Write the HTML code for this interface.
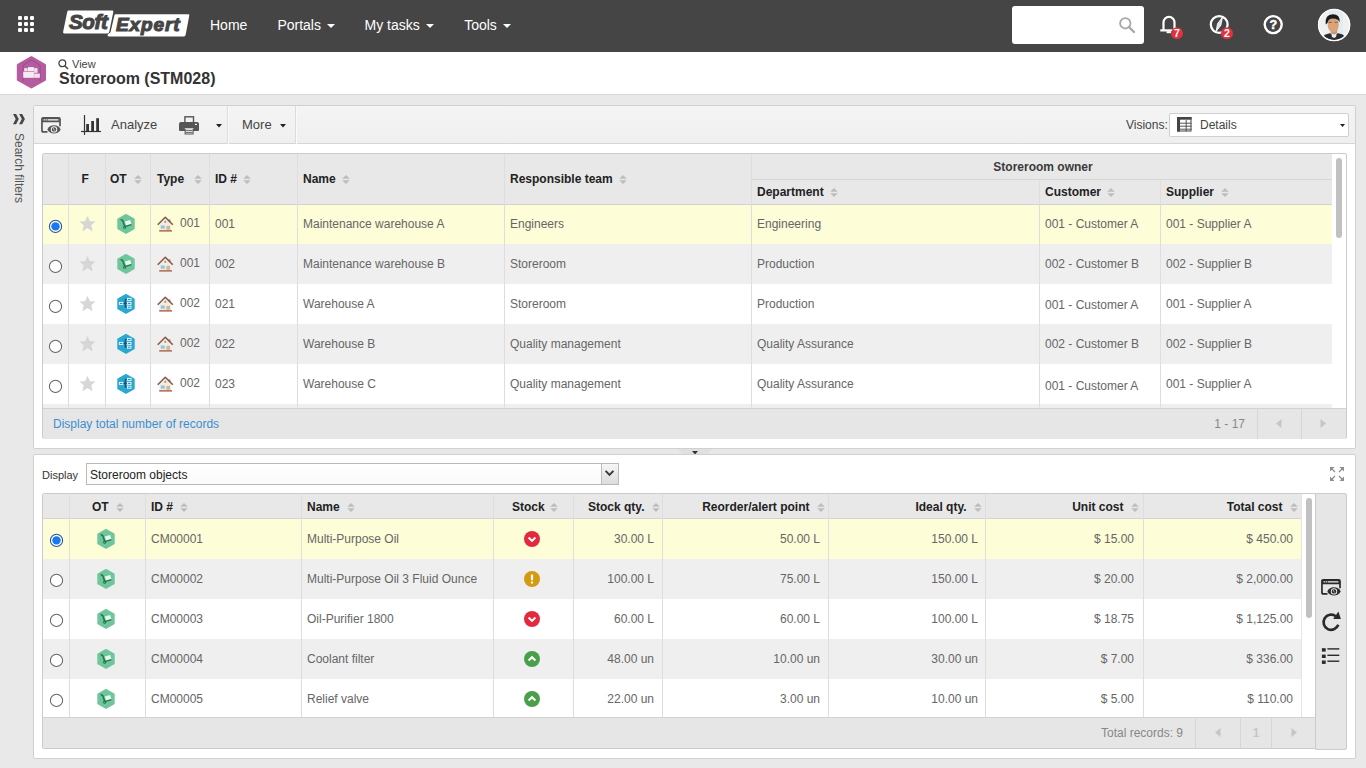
<!DOCTYPE html>
<html><head><meta charset="utf-8"><title>Storeroom</title>
<style>
html,body{margin:0;padding:0;}
body{width:1366px;height:768px;overflow:hidden;position:relative;background:#e9e9e9;font-family:"Liberation Sans", sans-serif;}
div{box-sizing:border-box;}
svg{position:absolute;overflow:visible;}
</style></head><body>

<div style="position:absolute;left:0px;top:0px;width:1366px;height:52px;background:#454545;"></div>
<svg style="left:18px;top:16px" width="16" height="16"><rect x="0" y="0" width="4" height="4" rx="1.2" fill="#fff"/><rect x="6" y="0" width="4" height="4" rx="1.2" fill="#fff"/><rect x="12" y="0" width="4" height="4" rx="1.2" fill="#fff"/><rect x="0" y="6" width="4" height="4" rx="1.2" fill="#fff"/><rect x="6" y="6" width="4" height="4" rx="1.2" fill="#fff"/><rect x="12" y="6" width="4" height="4" rx="1.2" fill="#fff"/><rect x="0" y="12" width="4" height="4" rx="1.2" fill="#fff"/><rect x="6" y="12" width="4" height="4" rx="1.2" fill="#fff"/><rect x="12" y="12" width="4" height="4" rx="1.2" fill="#fff"/></svg>
<svg style="left:0px;top:0px" width="200" height="50" viewBox="0 0 200 50">
<path d="M115.6 14.2 L188.2 14.2 Q189.6 14.2 189.3 15.6 L185.6 35 Q185.3 36.4 183.9 36.4 L108.8 36.4 Q107.2 36.4 107.6 35 L108.6 33.6 Q110.2 33.4 110.6 32 L114.4 15.4 Q114.6 14.2 115.6 14.2 Z" fill="#fff"/>
<path d="M68.6 10.5 L112.2 10.5 Q113.6 10.5 113.3 11.9 L109.2 32 Q108.9 33.4 107.5 33.4 L64.2 33.4 Q62.8 33.4 63.1 32 L67.2 11.9 Q67.5 10.5 68.6 10.5 Z" fill="#fff"/>
<text x="69" y="29.3" font-family="Liberation Sans" font-weight="bold" font-style="italic" font-size="20.5" fill="#454545" stroke="#454545" stroke-width="1.1" letter-spacing="-0.3">Soft</text>
<text x="116" y="31.4" font-family="Liberation Sans" font-weight="bold" font-style="italic" font-size="19" fill="#454545" stroke="#454545" stroke-width="1.1" letter-spacing="0.9">Expert</text>
</svg>
<div style="position:absolute;left:210px;top:17.33px;font-size:14px;line-height:16.099999999999998px;color:#fff;font-weight:normal;white-space:nowrap;">Home</div>
<div style="position:absolute;left:277.4px;top:17.33px;font-size:14px;line-height:16.099999999999998px;color:#fff;font-weight:normal;white-space:nowrap;">Portals</div>
<svg style="left:327px;top:24px" width="8" height="4"><path d="M0 0 L8 0 L4.0 4 Z" fill="#fff"/></svg>
<div style="position:absolute;left:364.5px;top:17.33px;font-size:14px;line-height:16.099999999999998px;color:#fff;font-weight:normal;white-space:nowrap;">My tasks</div>
<svg style="left:426px;top:24px" width="8" height="4"><path d="M0 0 L8 0 L4.0 4 Z" fill="#fff"/></svg>
<div style="position:absolute;left:464.2px;top:17.33px;font-size:14px;line-height:16.099999999999998px;color:#fff;font-weight:normal;white-space:nowrap;">Tools</div>
<svg style="left:503px;top:24px" width="8" height="4"><path d="M0 0 L8 0 L4.0 4 Z" fill="#fff"/></svg>
<div style="position:absolute;left:1012px;top:6px;width:132px;height:38px;background:#fff;border-radius:3px;"></div>
<svg style="left:1119px;top:17px" width="16" height="16"><circle cx="6.3" cy="6.3" r="5.2" fill="none" stroke="#a8a8a8" stroke-width="1.8"/><path d="M10 10 L15 15" stroke="#a8a8a8" stroke-width="2.4" stroke-linecap="round"/></svg>
<svg style="left:1159px;top:14px" width="22" height="22" viewBox="0 0 22 22">
<path d="M4.5 16.3 V8.3 A5.5 5.5 0 0 1 15.5 8.3 V16.3" fill="none" stroke="#fff" stroke-width="2.2"/>
<path d="M1.3 16.4 H18" stroke="#fff" stroke-width="2.2"/>
<path d="M7.6 17.2 H12 V19.2 H7.6 Z" fill="#fff"/>
</svg>
<svg style="left:1171px;top:27px" width="13" height="13"><circle cx="6" cy="6.3" r="6" fill="#e0313f"/><text x="6" y="10.4" text-anchor="middle" font-family="Liberation Sans" font-weight="bold" font-size="10.5" fill="#fff">7</text></svg>
<svg style="left:1208px;top:13px" width="24" height="24" viewBox="1208 13 24 24">
<circle cx="1219.2" cy="24.5" r="8.4" fill="none" stroke="#fff" stroke-width="2.3"/>
<path d="M1222.4 17.4 L1220.9 25.2 L1216.1 31.4 L1217.6 23.6 Z" fill="#dde3ea" stroke="#fff" stroke-width="0.9" stroke-linejoin="round"/>
</svg>
<svg style="left:1221px;top:27px" width="13" height="13"><circle cx="6" cy="6.3" r="6" fill="#e0313f"/><text x="6" y="10.4" text-anchor="middle" font-family="Liberation Sans" font-weight="bold" font-size="10.5" fill="#fff">2</text></svg>
<svg style="left:1262px;top:13px" width="22" height="23" viewBox="1262 13 22 23">
<circle cx="1273.2" cy="24.6" r="8.5" fill="none" stroke="#fff" stroke-width="2.4"/>
<text x="1273.3" y="29.4" text-anchor="middle" font-family="Liberation Sans" font-weight="bold" font-size="12.5" fill="#fff" stroke="#fff" stroke-width="0.5">?</text>
</svg>
<svg style="left:1316px;top:7px" width="36" height="36" viewBox="1316 7 36 36">
<defs><clipPath id="av"><circle cx="1334.1" cy="25" r="15.2"/></clipPath></defs>
<circle cx="1334.1" cy="25" r="16.1" fill="#f7f7f7"/>
<g clip-path="url(#av)">
<rect x="1316" y="7" width="36" height="36" fill="#eef0f2"/>
<rect x="1329" y="9" width="14" height="26" fill="#e3ecef"/>
<path d="M1322 43 L1324.3 35 Q1327 33.6 1330 33.2 L1334 35 L1338 33.2 Q1341.5 33.6 1343.5 35 L1346 43 Z" fill="#2a2c33"/>
<path d="M1331 32.5 L1337 32.5 L1336 37 L1334 38 L1332 37 Z" fill="#e9ecef"/>
<path d="M1330.5 28 L1337.5 28 L1337 33.5 L1334 34.5 L1331 33.5 Z" fill="#c9986f"/>
<ellipse cx="1333.2" cy="24.8" rx="5.6" ry="7.4" fill="#d9a476"/>
<path d="M1325.6 24.5 Q1324.8 14.2 1332.8 14.2 Q1340.4 14.2 1339.6 22.5 Q1338.2 18.8 1333 18.6 Q1328.4 18.6 1327.5 23 Z" fill="#1b1b1f"/>
<path d="M1328.6 22.3 H1331.8 M1334.6 22.3 H1337.8" stroke="#6b4a3a" stroke-width="0.8"/>
</g>
<circle cx="1334.1" cy="25" r="15.6" fill="none" stroke="#fdfdfd" stroke-width="1.2"/>
</svg>
<div style="position:absolute;left:0px;top:52px;width:1366px;height:43px;background:#fff;border-bottom:1px solid #d9d9d9;"></div>
<svg style="left:16px;top:55px" width="31" height="35" viewBox="0 0 31 35">
<path d="M15.4 2.3 L28.9 9.9 L28.9 24.8 L15.4 32.4 L1.9 24.8 L1.9 9.9 Z" fill="#b45c9f" stroke="#b45c9f" stroke-width="2.2" stroke-linejoin="round"/>
<path d="M7.2 26 V10.2 L15.3 5 L24.1 10.2 V26" fill="none" stroke="#9b4a8a" stroke-width="1"/>
<rect x="8.2" y="13.1" width="3.4" height="2.9" fill="#efe2ec"/>
<rect x="11.9" y="12.1" width="6" height="3.9" fill="#f5ecf3"/>
<rect x="18.1" y="13.1" width="3.4" height="4.7" fill="#efe2ec"/>
<rect x="7.2" y="16.6" width="10.7" height="6.2" fill="#f5ecf3"/>
<rect x="18.1" y="18.6" width="5.8" height="4.2" fill="#efe2ec"/>
</svg>
<svg style="left:58px;top:59px" width="11" height="11"><circle cx="4.3" cy="4.3" r="3.4" fill="none" stroke="#444" stroke-width="1.3"/><path d="M6.8 6.8 L10 10" stroke="#444" stroke-width="1.5"/></svg>
<div style="position:absolute;left:72px;top:58.04px;font-size:11px;line-height:12.649999999999999px;color:#444;font-weight:normal;white-space:nowrap;">View</div>
<div style="position:absolute;left:59px;top:69.52px;font-size:16px;line-height:18.4px;color:#333;font-weight:bold;white-space:nowrap;">Storeroom (STM028)</div>
<svg style="left:12.9px;top:113.8px" width="13" height="11" viewBox="0 0 13 11"><path d="M0 0 L3.1 0 L5.8 5.1 L3.1 10.2 L0 10.2 L2.7 5.1 Z M6.1 0 L9.2 0 L11.9 5.1 L9.2 10.2 L6.1 10.2 L8.8 5.1 Z" fill="#474747"/></svg>
<div style="position:absolute;left:25.5px;top:133px;transform-origin:0 0;transform:rotate(90deg);font-size:12px;line-height:14px;color:#555;white-space:nowrap;">Search filters</div>
<div style="position:absolute;left:33px;top:105px;width:1323px;height:344px;background:#fff;border:1px solid #d0d0d0;border-radius:2px;"></div>
<div style="position:absolute;left:34px;top:106px;width:1321px;height:38px;background:linear-gradient(#f4f4f4,#efefef);border-bottom:1px solid #d6d6d6;"></div>
<div style="position:absolute;left:227px;top:106px;width:1px;height:38px;background:#dcdcdc;"></div>
<div style="position:absolute;left:228px;top:106px;width:1px;height:38px;background:#fafafa;"></div>
<div style="position:absolute;left:295px;top:106px;width:1px;height:38px;background:#dcdcdc;"></div>
<div style="position:absolute;left:296px;top:106px;width:1px;height:38px;background:#fafafa;"></div>
<svg style="left:41px;top:117px" width="21" height="18" viewBox="0 0 21 18">
<path d="M6.5 14.9 H2.2 Q0.95 14.9 0.95 13.6 V2.1 Q0.95 0.85 2.2 0.85 H17.8 Q19 0.85 19 2.1 V9.3" fill="none" stroke="#555" stroke-width="1.7"/>
<rect x="0.95" y="0.85" width="18" height="4.4" fill="#555"/>
<rect x="2.6" y="2.2" width="1.3" height="1.3" fill="#f2f2f2"/><rect x="4.6" y="2.2" width="1.3" height="1.3" fill="#f2f2f2"/>
<rect x="6.6" y="2.2" width="10.8" height="1.3" fill="#f2f2f2"/>
<path d="M5.6 12.4 C8.2 6.4 17.8 6.4 20.4 12.4 C17.8 18.4 8.2 18.4 5.6 12.4 Z" fill="#f2f2f2"/><path d="M6.3 12.4 C8.7 7 17.3 7 19.7 12.4 C17.3 17.8 8.7 17.8 6.3 12.4 Z" fill="#555"/>
<circle cx="13" cy="12.4" r="3.2" fill="#f2f2f2"/>
<circle cx="13" cy="12.4" r="2.2" fill="#555"/>
<path d="M12.3 10.9 L12.9 12.9 L13.8 13.3" fill="none" stroke="#f2f2f2" stroke-width="0.6"/>
</svg>
<svg style="left:81px;top:115px" width="21" height="21" viewBox="0 0 21 21">
<path d="M3.5 0 V20" stroke="#333" stroke-width="1.2"/>
<path d="M0 16.5 H20" stroke="#333" stroke-width="1.2"/>
<rect x="5.2" y="9" width="2.8" height="7.5" fill="#333"/>
<rect x="10.2" y="6" width="2.8" height="10.5" fill="#333"/>
<rect x="15.2" y="3.2" width="2.8" height="13.3" fill="#333"/>
</svg>
<div style="position:absolute;left:111px;top:118.23px;font-size:13px;line-height:14.95px;color:#444;font-weight:normal;white-space:nowrap;">Analyze</div>
<svg style="left:179px;top:116px" width="20" height="19" viewBox="0 0 20 19">
<rect x="5.9" y="0.8" width="8.6" height="6" fill="none" stroke="#555" stroke-width="1.4"/>
<path d="M2 6 H18 Q20 6 20 8 V14 Q20 15 19 15 H1 Q0 15 0 14 V8 Q0 6 2 6 Z" fill="#555"/>
<path d="M3.8 11.5 H16.2 L14.6 13 V18.6 H5.6 V13 Z" fill="#555"/>
<path d="M5.2 12.2 H15 L13.6 13.3 V17.5 H6.7 V13.3 Z" fill="#f2f2f2"/>
<rect x="6.7" y="13.9" width="6.9" height="0.9" fill="#555"/>
<rect x="6.7" y="15.9" width="6.9" height="0.9" fill="#555"/>
<rect x="16" y="7.8" width="1.8" height="1.2" fill="#fff"/>
</svg>
<svg style="left:216px;top:124px" width="6" height="3.6"><path d="M0 0 L6 0 L3.0 3.6 Z" fill="#222"/></svg>
<div style="position:absolute;left:242px;top:118.23px;font-size:13px;line-height:14.95px;color:#444;font-weight:normal;white-space:nowrap;">More</div>
<svg style="left:280px;top:124px" width="6" height="3.6"><path d="M0 0 L6 0 L3.0 3.6 Z" fill="#222"/></svg>
<div style="position:absolute;left:1126px;top:119.14px;font-size:12px;line-height:13.799999999999999px;color:#444;font-weight:normal;white-space:nowrap;">Visions:</div>
<div style="position:absolute;left:1169px;top:113px;width:180px;height:24px;background:#fff;border:1px solid #cfcfcf;border-radius:2px;"></div>
<svg style="left:1177px;top:117px" width="15" height="15"><rect x="0.5" y="0.5" width="13.5" height="13.5" fill="#fff" stroke="#444" stroke-width="1"/><rect x="0" y="0" width="14.5" height="2.7" fill="#444"/><rect x="0" y="0" width="3" height="14.5" fill="#444"/><path d="M3 6.2 H14.5" stroke="#444" stroke-width="0.9"/><path d="M3 9.2 H14.5" stroke="#444" stroke-width="0.9"/><path d="M3 12.2 H14.5" stroke="#444" stroke-width="0.9"/><path d="M9.2 3 V14.5" stroke="#444" stroke-width="0.9"/></svg>
<div style="position:absolute;left:1200px;top:119.14px;font-size:12px;line-height:13.799999999999999px;color:#444;font-weight:normal;white-space:nowrap;">Details</div>
<svg style="left:1340px;top:124px" width="5" height="3"><path d="M0 0 L5 0 L2.5 3 Z" fill="#222"/></svg>
<div style="position:absolute;left:42px;top:153px;width:1305px;height:286px;background:#fff;border:1px solid #cbcbcb;border-radius:2px;"></div>
<div style="position:absolute;left:43px;top:154px;width:1289px;height:51px;background:#e8e8e8;border-bottom:1px solid #d2d2d2;"></div>
<div style="position:absolute;left:43px;top:205px;width:1289px;height:39px;background:#fdfdd8;"></div>
<div style="position:absolute;left:43px;top:244px;width:1289px;height:40px;background:#efefef;"></div>
<div style="position:absolute;left:43px;top:284px;width:1289px;height:40px;background:#fff;"></div>
<div style="position:absolute;left:43px;top:324px;width:1289px;height:40px;background:#efefef;"></div>
<div style="position:absolute;left:43px;top:364px;width:1289px;height:40px;background:#fff;"></div>
<div style="position:absolute;left:43px;top:404px;width:1289px;height:4px;background:#efefef;"></div>
<div style="position:absolute;left:68px;top:154px;width:1px;height:254px;background:#dedede;"></div>
<div style="position:absolute;left:105px;top:154px;width:1px;height:254px;background:#dedede;"></div>
<div style="position:absolute;left:150px;top:154px;width:1px;height:254px;background:#dedede;"></div>
<div style="position:absolute;left:209px;top:154px;width:1px;height:254px;background:#dedede;"></div>
<div style="position:absolute;left:297px;top:154px;width:1px;height:254px;background:#dedede;"></div>
<div style="position:absolute;left:504px;top:154px;width:1px;height:254px;background:#dedede;"></div>
<div style="position:absolute;left:751px;top:154px;width:1px;height:254px;background:#dedede;"></div>
<div style="position:absolute;left:1039px;top:179px;width:1px;height:229px;background:#dedede;"></div>
<div style="position:absolute;left:1160px;top:179px;width:1px;height:229px;background:#dedede;"></div>
<div style="position:absolute;left:751px;top:179px;width:581px;height:1px;background:#d6d6d6;"></div>
<div style="position:absolute;left:1336px;top:158px;width:6px;height:80px;background:#c1c1c1;border-radius:3px;"></div>
<div style="position:absolute;left:81.5px;top:173.14px;font-size:12px;line-height:13.799999999999999px;color:#222;font-weight:bold;white-space:nowrap;">F</div>
<div style="position:absolute;left:110px;top:173.14px;font-size:12px;line-height:13.799999999999999px;color:#222;font-weight:bold;white-space:nowrap;">OT</div>
<svg style="left:134px;top:175px" width="8" height="9"><path d="M0.2 3.7 L4 0 L7.8 3.7 Z M0.2 5.3 L4 9 L7.8 5.3 Z" fill="#bdbdbd"/></svg>
<div style="position:absolute;left:157px;top:173.14px;font-size:12px;line-height:13.799999999999999px;color:#222;font-weight:bold;white-space:nowrap;">Type</div>
<svg style="left:194px;top:175px" width="8" height="9"><path d="M0.2 3.7 L4 0 L7.8 3.7 Z M0.2 5.3 L4 9 L7.8 5.3 Z" fill="#bdbdbd"/></svg>
<div style="position:absolute;left:215px;top:173.14px;font-size:12px;line-height:13.799999999999999px;color:#222;font-weight:bold;white-space:nowrap;">ID #</div>
<svg style="left:243px;top:175px" width="8" height="9"><path d="M0.2 3.7 L4 0 L7.8 3.7 Z M0.2 5.3 L4 9 L7.8 5.3 Z" fill="#bdbdbd"/></svg>
<div style="position:absolute;left:303px;top:173.14px;font-size:12px;line-height:13.799999999999999px;color:#222;font-weight:bold;white-space:nowrap;">Name</div>
<svg style="left:342px;top:175px" width="8" height="9"><path d="M0.2 3.7 L4 0 L7.8 3.7 Z M0.2 5.3 L4 9 L7.8 5.3 Z" fill="#bdbdbd"/></svg>
<div style="position:absolute;left:510px;top:173.14px;font-size:12px;line-height:13.799999999999999px;color:#222;font-weight:bold;white-space:nowrap;">Responsible team</div>
<svg style="left:619px;top:175px" width="8" height="9"><path d="M0.2 3.7 L4 0 L7.8 3.7 Z M0.2 5.3 L4 9 L7.8 5.3 Z" fill="#bdbdbd"/></svg>
<div style="position:absolute;left:843px;width:400px;top:161.14px;font-size:12px;line-height:13.799999999999999px;color:#3a3a3a;font-weight:bold;white-space:nowrap;text-align:center;">Storeroom owner</div>
<div style="position:absolute;left:757px;top:186.14px;font-size:12px;line-height:13.799999999999999px;color:#222;font-weight:bold;white-space:nowrap;">Department</div>
<svg style="left:830px;top:188px" width="8" height="9"><path d="M0.2 3.7 L4 0 L7.8 3.7 Z M0.2 5.3 L4 9 L7.8 5.3 Z" fill="#bdbdbd"/></svg>
<div style="position:absolute;left:1045px;top:186.14px;font-size:12px;line-height:13.799999999999999px;color:#222;font-weight:bold;white-space:nowrap;">Customer</div>
<svg style="left:1107px;top:188px" width="8" height="9"><path d="M0.2 3.7 L4 0 L7.8 3.7 Z M0.2 5.3 L4 9 L7.8 5.3 Z" fill="#bdbdbd"/></svg>
<div style="position:absolute;left:1166px;top:186.14px;font-size:12px;line-height:13.799999999999999px;color:#222;font-weight:bold;white-space:nowrap;">Supplier</div>
<svg style="left:1221px;top:188px" width="8" height="9"><path d="M0.2 3.7 L4 0 L7.8 3.7 Z M0.2 5.3 L4 9 L7.8 5.3 Z" fill="#bdbdbd"/></svg>
<svg style="left:48px;top:219px" width="15" height="15"><circle cx="7.5" cy="7.4" r="6.1" fill="#fff" stroke="#24589a" stroke-width="1.1"/><circle cx="7.5" cy="7.4" r="4.2" fill="#1877f2"/></svg>
<svg style="left:80px;top:216px" width="15" height="16" viewBox="0 0 15 15.5"><path d="M7.5 0.3 L9.6 5.2 L14.7 5.6 L10.9 9.1 L12.2 14.6 L7.5 11.6 L2.8 14.6 L4.1 9.1 L0.3 5.6 L5.4 5.2 Z" fill="#d6d6d6" stroke="#cfcfcf" stroke-width="0.5" stroke-linejoin="round"/></svg>
<svg style="left:116px;top:213px" width="20" height="21" viewBox="0 0 20 21">
<path d="M10 1.7 L17.9 6.3 L17.9 15.5 L10 20.1 L2.1 15.5 L2.1 6.3 Z" fill="#70c69c" stroke="#70c69c" stroke-width="1.6" stroke-linejoin="round"/>
<path d="M8.9 8.4 L14.2 6.9 L15.4 11.3 L10.1 12.8 Z" fill="#eaf8ef"/>
<path d="M5.1 6.7 L6.7 7.6 L8.7 13.4" fill="none" stroke="#1b7a45" stroke-width="1.5" stroke-linecap="round"/>
<path d="M8.4 13.6 L15.4 11.6" stroke="#1b7a45" stroke-width="1.4"/>
<circle cx="8.6" cy="14.2" r="1.5" fill="#1b7a45"/><circle cx="8.6" cy="14.2" r="0.5" fill="#70c69c"/>
</svg>
<svg style="left:157px;top:216px" width="17" height="16" viewBox="0 0 17 16">
<path d="M2.5 8 V15 H14 V8 L8.3 2.6 Z" fill="#f7ecd9"/>
<path d="M0.7 8.8 L8.3 1.3 L15.8 8.8" fill="none" stroke="#8d5a48" stroke-width="1.6" stroke-linejoin="round"/>
<path d="M12.5 3.5 V6" stroke="#8d5a48" stroke-width="1.6"/>
<circle cx="8.3" cy="5.8" r="1.1" fill="#5aa8e0"/>
<rect x="3.8" y="9.5" width="4" height="3.2" fill="#8cc6ee"/>
<rect x="9.3" y="9.8" width="3.8" height="4" fill="#c8b9a6"/>
<rect x="2.2" y="14" width="12.8" height="1.7" fill="#b9785e"/>
</svg>
<div style="position:absolute;left:180px;top:217.14px;font-size:12px;line-height:13.799999999999999px;color:#666;font-weight:normal;white-space:nowrap;">001</div>
<div style="position:absolute;left:215px;top:218.14px;font-size:12px;line-height:13.799999999999999px;color:#666;font-weight:normal;white-space:nowrap;">001</div>
<div style="position:absolute;left:303px;top:218.14px;font-size:12px;line-height:13.799999999999999px;color:#666;font-weight:normal;white-space:nowrap;">Maintenance warehouse A</div>
<div style="position:absolute;left:510px;top:218.14px;font-size:12px;line-height:13.799999999999999px;color:#666;font-weight:normal;white-space:nowrap;">Engineers</div>
<div style="position:absolute;left:757px;top:218.14px;font-size:12px;line-height:13.799999999999999px;color:#666;font-weight:normal;white-space:nowrap;">Engineering</div>
<div style="position:absolute;left:1045px;top:218.14px;font-size:12px;line-height:13.799999999999999px;color:#666;font-weight:normal;white-space:nowrap;">001 - Customer A</div>
<div style="position:absolute;left:1166px;top:218.14px;font-size:12px;line-height:13.799999999999999px;color:#666;font-weight:normal;white-space:nowrap;">001 - Supplier A</div>
<svg style="left:48px;top:259px" width="15" height="15"><circle cx="7.5" cy="7.4" r="6.1" fill="#fff" stroke="#666" stroke-width="1.05"/></svg>
<svg style="left:80px;top:256px" width="15" height="16" viewBox="0 0 15 15.5"><path d="M7.5 0.3 L9.6 5.2 L14.7 5.6 L10.9 9.1 L12.2 14.6 L7.5 11.6 L2.8 14.6 L4.1 9.1 L0.3 5.6 L5.4 5.2 Z" fill="#d6d6d6" stroke="#cfcfcf" stroke-width="0.5" stroke-linejoin="round"/></svg>
<svg style="left:116px;top:253px" width="20" height="21" viewBox="0 0 20 21">
<path d="M10 1.7 L17.9 6.3 L17.9 15.5 L10 20.1 L2.1 15.5 L2.1 6.3 Z" fill="#70c69c" stroke="#70c69c" stroke-width="1.6" stroke-linejoin="round"/>
<path d="M8.9 8.4 L14.2 6.9 L15.4 11.3 L10.1 12.8 Z" fill="#eaf8ef"/>
<path d="M5.1 6.7 L6.7 7.6 L8.7 13.4" fill="none" stroke="#1b7a45" stroke-width="1.5" stroke-linecap="round"/>
<path d="M8.4 13.6 L15.4 11.6" stroke="#1b7a45" stroke-width="1.4"/>
<circle cx="8.6" cy="14.2" r="1.5" fill="#1b7a45"/><circle cx="8.6" cy="14.2" r="0.5" fill="#70c69c"/>
</svg>
<svg style="left:157px;top:256px" width="17" height="16" viewBox="0 0 17 16">
<path d="M2.5 8 V15 H14 V8 L8.3 2.6 Z" fill="#f7ecd9"/>
<path d="M0.7 8.8 L8.3 1.3 L15.8 8.8" fill="none" stroke="#8d5a48" stroke-width="1.6" stroke-linejoin="round"/>
<path d="M12.5 3.5 V6" stroke="#8d5a48" stroke-width="1.6"/>
<circle cx="8.3" cy="5.8" r="1.1" fill="#5aa8e0"/>
<rect x="3.8" y="9.5" width="4" height="3.2" fill="#8cc6ee"/>
<rect x="9.3" y="9.8" width="3.8" height="4" fill="#c8b9a6"/>
<rect x="2.2" y="14" width="12.8" height="1.7" fill="#b9785e"/>
</svg>
<div style="position:absolute;left:180px;top:257.14px;font-size:12px;line-height:13.799999999999999px;color:#666;font-weight:normal;white-space:nowrap;">001</div>
<div style="position:absolute;left:215px;top:258.14px;font-size:12px;line-height:13.799999999999999px;color:#666;font-weight:normal;white-space:nowrap;">002</div>
<div style="position:absolute;left:303px;top:258.14px;font-size:12px;line-height:13.799999999999999px;color:#666;font-weight:normal;white-space:nowrap;">Maintenance warehouse B</div>
<div style="position:absolute;left:510px;top:258.14px;font-size:12px;line-height:13.799999999999999px;color:#666;font-weight:normal;white-space:nowrap;">Storeroom</div>
<div style="position:absolute;left:757px;top:258.14px;font-size:12px;line-height:13.799999999999999px;color:#666;font-weight:normal;white-space:nowrap;">Production</div>
<div style="position:absolute;left:1045px;top:258.14px;font-size:12px;line-height:13.799999999999999px;color:#666;font-weight:normal;white-space:nowrap;">002 - Customer B</div>
<div style="position:absolute;left:1166px;top:258.14px;font-size:12px;line-height:13.799999999999999px;color:#666;font-weight:normal;white-space:nowrap;">002 - Supplier B</div>
<svg style="left:48px;top:299px" width="15" height="15"><circle cx="7.5" cy="7.4" r="6.1" fill="#fff" stroke="#666" stroke-width="1.05"/></svg>
<svg style="left:80px;top:296px" width="15" height="16" viewBox="0 0 15 15.5"><path d="M7.5 0.3 L9.6 5.2 L14.7 5.6 L10.9 9.1 L12.2 14.6 L7.5 11.6 L2.8 14.6 L4.1 9.1 L0.3 5.6 L5.4 5.2 Z" fill="#d6d6d6" stroke="#cfcfcf" stroke-width="0.5" stroke-linejoin="round"/></svg>
<svg style="left:116px;top:293px" width="20" height="21" viewBox="0 0 20 21">
<path d="M10 1.7 L17.9 6.3 L17.9 15.5 L10 20.1 L2.1 15.5 L2.1 6.3 Z" fill="#2ba8d0" stroke="#2ba8d0" stroke-width="1.6" stroke-linejoin="round"/>
<path d="M7 10.4 H10 M9.3 6.4 V14.2 M9.3 6.4 H11 M9.3 14.2 H11 M9.3 10.4 H11" stroke="#154e7c" stroke-width="1.3" fill="none"/>
<rect x="3.4" y="9.4" width="3.5" height="2" fill="#1f8fb8" stroke="#f0fafd" stroke-width="0.9"/>
<rect x="11.4" y="5.4" width="3.6" height="2" fill="#1f8fb8" stroke="#f0fafd" stroke-width="0.9"/>
<rect x="11.4" y="9.4" width="3.6" height="2" fill="#1f8fb8" stroke="#f0fafd" stroke-width="0.9"/>
<rect x="11.4" y="13.2" width="3.6" height="2" fill="#1f8fb8" stroke="#f0fafd" stroke-width="0.9"/>
</svg>
<svg style="left:157px;top:296px" width="17" height="16" viewBox="0 0 17 16">
<path d="M2.5 8 V15 H14 V8 L8.3 2.6 Z" fill="#f7ecd9"/>
<path d="M0.7 8.8 L8.3 1.3 L15.8 8.8" fill="none" stroke="#8d5a48" stroke-width="1.6" stroke-linejoin="round"/>
<path d="M12.5 3.5 V6" stroke="#8d5a48" stroke-width="1.6"/>
<circle cx="8.3" cy="5.8" r="1.1" fill="#5aa8e0"/>
<rect x="3.8" y="9.5" width="4" height="3.2" fill="#8cc6ee"/>
<rect x="9.3" y="9.8" width="3.8" height="4" fill="#c8b9a6"/>
<rect x="2.2" y="14" width="12.8" height="1.7" fill="#b9785e"/>
</svg>
<div style="position:absolute;left:180px;top:297.14px;font-size:12px;line-height:13.799999999999999px;color:#666;font-weight:normal;white-space:nowrap;">002</div>
<div style="position:absolute;left:215px;top:298.14px;font-size:12px;line-height:13.799999999999999px;color:#666;font-weight:normal;white-space:nowrap;">021</div>
<div style="position:absolute;left:303px;top:298.14px;font-size:12px;line-height:13.799999999999999px;color:#666;font-weight:normal;white-space:nowrap;">Warehouse A</div>
<div style="position:absolute;left:510px;top:298.14px;font-size:12px;line-height:13.799999999999999px;color:#666;font-weight:normal;white-space:nowrap;">Storeroom</div>
<div style="position:absolute;left:757px;top:298.14px;font-size:12px;line-height:13.799999999999999px;color:#666;font-weight:normal;white-space:nowrap;">Production</div>
<div style="position:absolute;left:1045px;top:299.14px;font-size:12px;line-height:13.799999999999999px;color:#666;font-weight:normal;white-space:nowrap;">001 - Customer A</div>
<div style="position:absolute;left:1166px;top:298.14px;font-size:12px;line-height:13.799999999999999px;color:#666;font-weight:normal;white-space:nowrap;">001 - Supplier A</div>
<svg style="left:48px;top:339px" width="15" height="15"><circle cx="7.5" cy="7.4" r="6.1" fill="#fff" stroke="#666" stroke-width="1.05"/></svg>
<svg style="left:80px;top:336px" width="15" height="16" viewBox="0 0 15 15.5"><path d="M7.5 0.3 L9.6 5.2 L14.7 5.6 L10.9 9.1 L12.2 14.6 L7.5 11.6 L2.8 14.6 L4.1 9.1 L0.3 5.6 L5.4 5.2 Z" fill="#d6d6d6" stroke="#cfcfcf" stroke-width="0.5" stroke-linejoin="round"/></svg>
<svg style="left:116px;top:333px" width="20" height="21" viewBox="0 0 20 21">
<path d="M10 1.7 L17.9 6.3 L17.9 15.5 L10 20.1 L2.1 15.5 L2.1 6.3 Z" fill="#2ba8d0" stroke="#2ba8d0" stroke-width="1.6" stroke-linejoin="round"/>
<path d="M7 10.4 H10 M9.3 6.4 V14.2 M9.3 6.4 H11 M9.3 14.2 H11 M9.3 10.4 H11" stroke="#154e7c" stroke-width="1.3" fill="none"/>
<rect x="3.4" y="9.4" width="3.5" height="2" fill="#1f8fb8" stroke="#f0fafd" stroke-width="0.9"/>
<rect x="11.4" y="5.4" width="3.6" height="2" fill="#1f8fb8" stroke="#f0fafd" stroke-width="0.9"/>
<rect x="11.4" y="9.4" width="3.6" height="2" fill="#1f8fb8" stroke="#f0fafd" stroke-width="0.9"/>
<rect x="11.4" y="13.2" width="3.6" height="2" fill="#1f8fb8" stroke="#f0fafd" stroke-width="0.9"/>
</svg>
<svg style="left:157px;top:336px" width="17" height="16" viewBox="0 0 17 16">
<path d="M2.5 8 V15 H14 V8 L8.3 2.6 Z" fill="#f7ecd9"/>
<path d="M0.7 8.8 L8.3 1.3 L15.8 8.8" fill="none" stroke="#8d5a48" stroke-width="1.6" stroke-linejoin="round"/>
<path d="M12.5 3.5 V6" stroke="#8d5a48" stroke-width="1.6"/>
<circle cx="8.3" cy="5.8" r="1.1" fill="#5aa8e0"/>
<rect x="3.8" y="9.5" width="4" height="3.2" fill="#8cc6ee"/>
<rect x="9.3" y="9.8" width="3.8" height="4" fill="#c8b9a6"/>
<rect x="2.2" y="14" width="12.8" height="1.7" fill="#b9785e"/>
</svg>
<div style="position:absolute;left:180px;top:337.14px;font-size:12px;line-height:13.799999999999999px;color:#666;font-weight:normal;white-space:nowrap;">002</div>
<div style="position:absolute;left:215px;top:338.14px;font-size:12px;line-height:13.799999999999999px;color:#666;font-weight:normal;white-space:nowrap;">022</div>
<div style="position:absolute;left:303px;top:338.14px;font-size:12px;line-height:13.799999999999999px;color:#666;font-weight:normal;white-space:nowrap;">Warehouse B</div>
<div style="position:absolute;left:510px;top:338.14px;font-size:12px;line-height:13.799999999999999px;color:#666;font-weight:normal;white-space:nowrap;">Quality management</div>
<div style="position:absolute;left:757px;top:338.14px;font-size:12px;line-height:13.799999999999999px;color:#666;font-weight:normal;white-space:nowrap;">Quality Assurance</div>
<div style="position:absolute;left:1045px;top:338.14px;font-size:12px;line-height:13.799999999999999px;color:#666;font-weight:normal;white-space:nowrap;">002 - Customer B</div>
<div style="position:absolute;left:1166px;top:338.14px;font-size:12px;line-height:13.799999999999999px;color:#666;font-weight:normal;white-space:nowrap;">002 - Supplier B</div>
<svg style="left:48px;top:379px" width="15" height="15"><circle cx="7.5" cy="7.4" r="6.1" fill="#fff" stroke="#666" stroke-width="1.05"/></svg>
<svg style="left:80px;top:376px" width="15" height="16" viewBox="0 0 15 15.5"><path d="M7.5 0.3 L9.6 5.2 L14.7 5.6 L10.9 9.1 L12.2 14.6 L7.5 11.6 L2.8 14.6 L4.1 9.1 L0.3 5.6 L5.4 5.2 Z" fill="#d6d6d6" stroke="#cfcfcf" stroke-width="0.5" stroke-linejoin="round"/></svg>
<svg style="left:116px;top:373px" width="20" height="21" viewBox="0 0 20 21">
<path d="M10 1.7 L17.9 6.3 L17.9 15.5 L10 20.1 L2.1 15.5 L2.1 6.3 Z" fill="#2ba8d0" stroke="#2ba8d0" stroke-width="1.6" stroke-linejoin="round"/>
<path d="M7 10.4 H10 M9.3 6.4 V14.2 M9.3 6.4 H11 M9.3 14.2 H11 M9.3 10.4 H11" stroke="#154e7c" stroke-width="1.3" fill="none"/>
<rect x="3.4" y="9.4" width="3.5" height="2" fill="#1f8fb8" stroke="#f0fafd" stroke-width="0.9"/>
<rect x="11.4" y="5.4" width="3.6" height="2" fill="#1f8fb8" stroke="#f0fafd" stroke-width="0.9"/>
<rect x="11.4" y="9.4" width="3.6" height="2" fill="#1f8fb8" stroke="#f0fafd" stroke-width="0.9"/>
<rect x="11.4" y="13.2" width="3.6" height="2" fill="#1f8fb8" stroke="#f0fafd" stroke-width="0.9"/>
</svg>
<svg style="left:157px;top:376px" width="17" height="16" viewBox="0 0 17 16">
<path d="M2.5 8 V15 H14 V8 L8.3 2.6 Z" fill="#f7ecd9"/>
<path d="M0.7 8.8 L8.3 1.3 L15.8 8.8" fill="none" stroke="#8d5a48" stroke-width="1.6" stroke-linejoin="round"/>
<path d="M12.5 3.5 V6" stroke="#8d5a48" stroke-width="1.6"/>
<circle cx="8.3" cy="5.8" r="1.1" fill="#5aa8e0"/>
<rect x="3.8" y="9.5" width="4" height="3.2" fill="#8cc6ee"/>
<rect x="9.3" y="9.8" width="3.8" height="4" fill="#c8b9a6"/>
<rect x="2.2" y="14" width="12.8" height="1.7" fill="#b9785e"/>
</svg>
<div style="position:absolute;left:180px;top:377.14px;font-size:12px;line-height:13.799999999999999px;color:#666;font-weight:normal;white-space:nowrap;">002</div>
<div style="position:absolute;left:215px;top:378.14px;font-size:12px;line-height:13.799999999999999px;color:#666;font-weight:normal;white-space:nowrap;">023</div>
<div style="position:absolute;left:303px;top:378.14px;font-size:12px;line-height:13.799999999999999px;color:#666;font-weight:normal;white-space:nowrap;">Warehouse C</div>
<div style="position:absolute;left:510px;top:378.14px;font-size:12px;line-height:13.799999999999999px;color:#666;font-weight:normal;white-space:nowrap;">Quality management</div>
<div style="position:absolute;left:757px;top:378.14px;font-size:12px;line-height:13.799999999999999px;color:#666;font-weight:normal;white-space:nowrap;">Quality Assurance</div>
<div style="position:absolute;left:1045px;top:380.14px;font-size:12px;line-height:13.799999999999999px;color:#666;font-weight:normal;white-space:nowrap;">001 - Customer A</div>
<div style="position:absolute;left:1166px;top:378.14px;font-size:12px;line-height:13.799999999999999px;color:#666;font-weight:normal;white-space:nowrap;">001 - Supplier A</div>
<div style="position:absolute;left:43px;top:408px;width:1303px;height:31px;background:#e6e6e6;border-top:1px solid #d2d2d2;"></div>
<div style="position:absolute;left:53px;top:418.14px;font-size:12px;line-height:13.799999999999999px;color:#3b8fd0;font-weight:normal;white-space:nowrap;">Display total number of records</div>
<div style="position:absolute;right:121px;top:418.14px;font-size:12px;line-height:13.799999999999999px;color:#888;font-weight:normal;white-space:nowrap;text-align:right;">1 - 17</div>
<div style="position:absolute;left:1257px;top:408px;width:1px;height:31px;background:#d6d6d6;"></div>
<div style="position:absolute;left:1301px;top:408px;width:1px;height:31px;background:#d6d6d6;"></div>
<svg style="left:1276px;top:419px" width="6" height="9"><path d="M5.5 0 V9 L0 4.5 Z" fill="#c6c6c6"/></svg>
<svg style="left:1320px;top:419px" width="6" height="9"><path d="M0.5 0 V9 L6 4.5 Z" fill="#c6c6c6"/></svg>
<div style="position:absolute;left:33px;top:449px;width:1323px;height:5px;background:#e8e8e8;"></div>
<svg style="left:678px;top:449px" width="34" height="5"><path d="M0 0 H34 L30 5 H4 Z" fill="#e0e0e0"/></svg>
<svg style="left:691.5px;top:450.5px" width="6" height="3.5"><path d="M0 0 L6 0 L3.0 3.5 Z" fill="#333"/></svg>
<div style="position:absolute;left:33px;top:454px;width:1323px;height:305px;background:#fff;border:1px solid #d0d0d0;border-radius:2px;"></div>
<div style="position:absolute;left:42px;top:469.04px;font-size:11px;line-height:12.649999999999999px;color:#333;font-weight:normal;white-space:nowrap;">Display</div>
<div style="position:absolute;left:86px;top:463px;width:533px;height:22px;background:linear-gradient(#fff,#fbfbfb);border:1px solid #b9b9b9;"></div>
<div style="position:absolute;left:90px;top:469.14px;font-size:12px;line-height:13.799999999999999px;color:#222;font-weight:normal;white-space:nowrap;">Storeroom objects</div>
<div style="position:absolute;left:601px;top:464px;width:17px;height:20px;background:linear-gradient(#f6f6f6,#dcdcdc);border-left:1px solid #bdbdbd;"></div>
<svg style="left:605px;top:470px" width="9" height="6"><path d="M0.6 0.9 L4.5 4.9 L8.4 0.9" fill="none" stroke="#3a3a3a" stroke-width="2"/></svg>
<svg style="left:1330px;top:467px" width="15" height="15" viewBox="0 0 15 15">
<g fill="#8e8e8e"><path d="M0 0 H4.6 L0 4.6 Z"/><path d="M14 0 H9.4 L14 4.6 Z"/><path d="M0 14 H4.6 L0 9.4 Z"/><path d="M14 14 H9.4 L14 9.4 Z"/></g>
<g stroke="#8e8e8e" stroke-width="1.3"><path d="M1.5 1.5 L5 5"/><path d="M12.5 1.5 L9 5"/><path d="M1.5 12.5 L5 9"/><path d="M12.5 12.5 L9 9"/></g>
</svg>
<div style="position:absolute;left:42px;top:493px;width:1274px;height:256px;background:#fff;border:1px solid #cbcbcb;border-radius:2px;"></div>
<div style="position:absolute;left:43px;top:494px;width:1259px;height:25px;background:#e8e8e8;border-bottom:1px solid #d2d2d2;"></div>
<div style="position:absolute;left:43px;top:519px;width:1259px;height:40px;background:#fdfdd8;"></div>
<div style="position:absolute;left:43px;top:559px;width:1259px;height:40px;background:#efefef;"></div>
<div style="position:absolute;left:43px;top:599px;width:1259px;height:40px;background:#fff;"></div>
<div style="position:absolute;left:43px;top:639px;width:1259px;height:40px;background:#efefef;"></div>
<div style="position:absolute;left:43px;top:679px;width:1259px;height:40px;background:#fff;"></div>
<div style="position:absolute;left:69px;top:494px;width:1px;height:224px;background:#dedede;"></div>
<div style="position:absolute;left:145px;top:494px;width:1px;height:224px;background:#dedede;"></div>
<div style="position:absolute;left:301px;top:494px;width:1px;height:224px;background:#dedede;"></div>
<div style="position:absolute;left:493px;top:494px;width:1px;height:224px;background:#dedede;"></div>
<div style="position:absolute;left:573px;top:494px;width:1px;height:224px;background:#dedede;"></div>
<div style="position:absolute;left:662px;top:494px;width:1px;height:224px;background:#dedede;"></div>
<div style="position:absolute;left:828px;top:494px;width:1px;height:224px;background:#dedede;"></div>
<div style="position:absolute;left:985px;top:494px;width:1px;height:224px;background:#dedede;"></div>
<div style="position:absolute;left:1143px;top:494px;width:1px;height:224px;background:#dedede;"></div>
<div style="position:absolute;left:1306px;top:498px;width:6px;height:120px;background:#c1c1c1;border-radius:3px;"></div>
<div style="position:absolute;left:1315px;top:493px;width:32px;height:257px;background:#e6e6e6;border:1px solid #cbcbcb;border-radius:0 2px 2px 0;"></div>
<svg style="left:1321px;top:579px" width="21" height="18" viewBox="0 0 21 18">
<path d="M6.5 14.9 H2.2 Q0.95 14.9 0.95 13.6 V2.1 Q0.95 0.85 2.2 0.85 H17.8 Q19 0.85 19 2.1 V9.3" fill="none" stroke="#2a2a2a" stroke-width="1.7"/>
<rect x="0.95" y="0.85" width="18" height="4.4" fill="#2a2a2a"/>
<rect x="2.6" y="2.2" width="1.3" height="1.3" fill="#e6e6e6"/><rect x="4.6" y="2.2" width="1.3" height="1.3" fill="#e6e6e6"/>
<rect x="6.6" y="2.2" width="10.8" height="1.3" fill="#e6e6e6"/>
<path d="M5.6 12.4 C8.2 6.4 17.8 6.4 20.4 12.4 C17.8 18.4 8.2 18.4 5.6 12.4 Z" fill="#e6e6e6"/><path d="M6.3 12.4 C8.7 7 17.3 7 19.7 12.4 C17.3 17.8 8.7 17.8 6.3 12.4 Z" fill="#2a2a2a"/>
<circle cx="13" cy="12.4" r="3.2" fill="#e6e6e6"/>
<circle cx="13" cy="12.4" r="2.2" fill="#2a2a2a"/>
<path d="M12.3 10.9 L12.9 12.9 L13.8 13.3" fill="none" stroke="#e6e6e6" stroke-width="0.6"/>
</svg>
<svg style="left:1316px;top:605px" width="30" height="30" viewBox="0 0 30 30">
<path d="M22.3 19.8 A7.6 7.6 0 1 1 19.8 11.2" fill="none" stroke="#2a2a2a" stroke-width="2.6"/>
<path d="M17.2 13.9 L24.9 13.9 L22.4 6.6 Z" fill="#2a2a2a"/>
</svg>
<svg style="left:1321px;top:647px" width="20" height="18" viewBox="0 0 20 18">
<rect x="0.9" y="1.2" width="3.8" height="3.4" fill="#2a2a2a"/><rect x="6.4" y="1.2" width="11.9" height="1.4" fill="#2a2a2a"/>
<rect x="0.9" y="7.6" width="3.8" height="3.4" fill="#2a2a2a"/><rect x="6.4" y="7.6" width="11.9" height="1.4" fill="#2a2a2a"/>
<rect x="0.9" y="13.5" width="3.8" height="3.4" fill="#2a2a2a"/><rect x="6.4" y="13.5" width="11.9" height="1.4" fill="#2a2a2a"/>
</svg>
<div style="position:absolute;left:92px;top:501.14px;font-size:12px;line-height:13.799999999999999px;color:#222;font-weight:bold;white-space:nowrap;">OT</div>
<svg style="left:116px;top:503px" width="8" height="9"><path d="M0.2 3.7 L4 0 L7.8 3.7 Z M0.2 5.3 L4 9 L7.8 5.3 Z" fill="#bdbdbd"/></svg>
<div style="position:absolute;left:151px;top:501.14px;font-size:12px;line-height:13.799999999999999px;color:#222;font-weight:bold;white-space:nowrap;">ID #</div>
<svg style="left:180px;top:503px" width="8" height="9"><path d="M0.2 3.7 L4 0 L7.8 3.7 Z M0.2 5.3 L4 9 L7.8 5.3 Z" fill="#bdbdbd"/></svg>
<div style="position:absolute;left:307px;top:501.14px;font-size:12px;line-height:13.799999999999999px;color:#222;font-weight:bold;white-space:nowrap;">Name</div>
<svg style="left:347px;top:503px" width="8" height="9"><path d="M0.2 3.7 L4 0 L7.8 3.7 Z M0.2 5.3 L4 9 L7.8 5.3 Z" fill="#bdbdbd"/></svg>
<div style="position:absolute;left:512px;top:501.14px;font-size:12px;line-height:13.799999999999999px;color:#222;font-weight:bold;white-space:nowrap;">Stock</div>
<svg style="left:550px;top:503px" width="8" height="9"><path d="M0.2 3.7 L4 0 L7.8 3.7 Z M0.2 5.3 L4 9 L7.8 5.3 Z" fill="#bdbdbd"/></svg>
<div style="position:absolute;right:721.5px;top:501.14px;font-size:12px;line-height:13.799999999999999px;color:#222;font-weight:bold;white-space:nowrap;text-align:right;">Stock qty.</div>
<svg style="left:652px;top:503px" width="8" height="9"><path d="M0.2 3.7 L4 0 L7.8 3.7 Z M0.2 5.3 L4 9 L7.8 5.3 Z" fill="#bdbdbd"/></svg>
<div style="position:absolute;right:556.5px;top:501.14px;font-size:12px;line-height:13.799999999999999px;color:#222;font-weight:bold;white-space:nowrap;text-align:right;">Reorder/alert point</div>
<svg style="left:817px;top:503px" width="8" height="9"><path d="M0.2 3.7 L4 0 L7.8 3.7 Z M0.2 5.3 L4 9 L7.8 5.3 Z" fill="#bdbdbd"/></svg>
<div style="position:absolute;right:399.5px;top:501.14px;font-size:12px;line-height:13.799999999999999px;color:#222;font-weight:bold;white-space:nowrap;text-align:right;">Ideal qty.</div>
<svg style="left:974px;top:503px" width="8" height="9"><path d="M0.2 3.7 L4 0 L7.8 3.7 Z M0.2 5.3 L4 9 L7.8 5.3 Z" fill="#bdbdbd"/></svg>
<div style="position:absolute;right:242.5px;top:501.14px;font-size:12px;line-height:13.799999999999999px;color:#222;font-weight:bold;white-space:nowrap;text-align:right;">Unit cost</div>
<svg style="left:1131px;top:503px" width="8" height="9"><path d="M0.2 3.7 L4 0 L7.8 3.7 Z M0.2 5.3 L4 9 L7.8 5.3 Z" fill="#bdbdbd"/></svg>
<div style="position:absolute;right:83.5px;top:501.14px;font-size:12px;line-height:13.799999999999999px;color:#222;font-weight:bold;white-space:nowrap;text-align:right;">Total cost</div>
<svg style="left:1290px;top:503px" width="8" height="9"><path d="M0.2 3.7 L4 0 L7.8 3.7 Z M0.2 5.3 L4 9 L7.8 5.3 Z" fill="#bdbdbd"/></svg>
<svg style="left:49px;top:533px" width="15" height="15"><circle cx="7.5" cy="7.4" r="6.1" fill="#fff" stroke="#24589a" stroke-width="1.1"/><circle cx="7.5" cy="7.4" r="4.2" fill="#1877f2"/></svg>
<svg style="left:96px;top:528px" width="20" height="21" viewBox="0 0 20 21">
<path d="M10 1.7 L17.9 6.3 L17.9 15.5 L10 20.1 L2.1 15.5 L2.1 6.3 Z" fill="#70c69c" stroke="#70c69c" stroke-width="1.6" stroke-linejoin="round"/>
<path d="M8.9 8.4 L14.2 6.9 L15.4 11.3 L10.1 12.8 Z" fill="#eaf8ef"/>
<path d="M5.1 6.7 L6.7 7.6 L8.7 13.4" fill="none" stroke="#1b7a45" stroke-width="1.5" stroke-linecap="round"/>
<path d="M8.4 13.6 L15.4 11.6" stroke="#1b7a45" stroke-width="1.4"/>
<circle cx="8.6" cy="14.2" r="1.5" fill="#1b7a45"/><circle cx="8.6" cy="14.2" r="0.5" fill="#70c69c"/>
</svg>
<div style="position:absolute;left:151px;top:533.14px;font-size:12px;line-height:13.799999999999999px;color:#666;font-weight:normal;white-space:nowrap;">CM00001</div>
<div style="position:absolute;left:307px;top:533.14px;font-size:12px;line-height:13.799999999999999px;color:#666;font-weight:normal;white-space:nowrap;">Multi-Purpose Oil</div>
<svg style="left:524px;top:531px" width="16" height="16"><circle cx="8" cy="8" r="8" fill="#e4293f"/><path d="M4.6 6.6 L8 9.9 L11.4 6.6" fill="none" stroke="#fff" stroke-width="2.1"/></svg>
<div style="position:absolute;right:712px;top:533.14px;font-size:12px;line-height:13.799999999999999px;color:#666;font-weight:normal;white-space:nowrap;text-align:right;">30.00 L</div>
<div style="position:absolute;right:546px;top:533.14px;font-size:12px;line-height:13.799999999999999px;color:#666;font-weight:normal;white-space:nowrap;text-align:right;">50.00 L</div>
<div style="position:absolute;right:388px;top:533.14px;font-size:12px;line-height:13.799999999999999px;color:#666;font-weight:normal;white-space:nowrap;text-align:right;">150.00 L</div>
<div style="position:absolute;right:232px;top:533.14px;font-size:12px;line-height:13.799999999999999px;color:#666;font-weight:normal;white-space:nowrap;text-align:right;">$ 15.00</div>
<div style="position:absolute;right:73px;top:533.14px;font-size:12px;line-height:13.799999999999999px;color:#666;font-weight:normal;white-space:nowrap;text-align:right;">$ 450.00</div>
<svg style="left:49px;top:573px" width="15" height="15"><circle cx="7.5" cy="7.4" r="6.1" fill="#fff" stroke="#666" stroke-width="1.05"/></svg>
<svg style="left:96px;top:568px" width="20" height="21" viewBox="0 0 20 21">
<path d="M10 1.7 L17.9 6.3 L17.9 15.5 L10 20.1 L2.1 15.5 L2.1 6.3 Z" fill="#70c69c" stroke="#70c69c" stroke-width="1.6" stroke-linejoin="round"/>
<path d="M8.9 8.4 L14.2 6.9 L15.4 11.3 L10.1 12.8 Z" fill="#eaf8ef"/>
<path d="M5.1 6.7 L6.7 7.6 L8.7 13.4" fill="none" stroke="#1b7a45" stroke-width="1.5" stroke-linecap="round"/>
<path d="M8.4 13.6 L15.4 11.6" stroke="#1b7a45" stroke-width="1.4"/>
<circle cx="8.6" cy="14.2" r="1.5" fill="#1b7a45"/><circle cx="8.6" cy="14.2" r="0.5" fill="#70c69c"/>
</svg>
<div style="position:absolute;left:151px;top:573.14px;font-size:12px;line-height:13.799999999999999px;color:#666;font-weight:normal;white-space:nowrap;">CM00002</div>
<div style="position:absolute;left:307px;top:573.14px;font-size:12px;line-height:13.799999999999999px;color:#666;font-weight:normal;white-space:nowrap;">Multi-Purpose Oil 3 Fluid Ounce</div>
<svg style="left:524px;top:571px" width="16" height="16"><circle cx="8" cy="8" r="8" fill="#d59a12"/><rect x="6.9" y="3.5" width="2.2" height="5.8" rx="0.6" fill="#fff"/><rect x="6.9" y="10.5" width="2.2" height="2.1" rx="0.5" fill="#fff"/></svg>
<div style="position:absolute;right:712px;top:573.14px;font-size:12px;line-height:13.799999999999999px;color:#666;font-weight:normal;white-space:nowrap;text-align:right;">100.00 L</div>
<div style="position:absolute;right:546px;top:573.14px;font-size:12px;line-height:13.799999999999999px;color:#666;font-weight:normal;white-space:nowrap;text-align:right;">75.00 L</div>
<div style="position:absolute;right:388px;top:573.14px;font-size:12px;line-height:13.799999999999999px;color:#666;font-weight:normal;white-space:nowrap;text-align:right;">150.00 L</div>
<div style="position:absolute;right:232px;top:573.14px;font-size:12px;line-height:13.799999999999999px;color:#666;font-weight:normal;white-space:nowrap;text-align:right;">$ 20.00</div>
<div style="position:absolute;right:73px;top:573.14px;font-size:12px;line-height:13.799999999999999px;color:#666;font-weight:normal;white-space:nowrap;text-align:right;">$ 2,000.00</div>
<svg style="left:49px;top:613px" width="15" height="15"><circle cx="7.5" cy="7.4" r="6.1" fill="#fff" stroke="#666" stroke-width="1.05"/></svg>
<svg style="left:96px;top:608px" width="20" height="21" viewBox="0 0 20 21">
<path d="M10 1.7 L17.9 6.3 L17.9 15.5 L10 20.1 L2.1 15.5 L2.1 6.3 Z" fill="#70c69c" stroke="#70c69c" stroke-width="1.6" stroke-linejoin="round"/>
<path d="M8.9 8.4 L14.2 6.9 L15.4 11.3 L10.1 12.8 Z" fill="#eaf8ef"/>
<path d="M5.1 6.7 L6.7 7.6 L8.7 13.4" fill="none" stroke="#1b7a45" stroke-width="1.5" stroke-linecap="round"/>
<path d="M8.4 13.6 L15.4 11.6" stroke="#1b7a45" stroke-width="1.4"/>
<circle cx="8.6" cy="14.2" r="1.5" fill="#1b7a45"/><circle cx="8.6" cy="14.2" r="0.5" fill="#70c69c"/>
</svg>
<div style="position:absolute;left:151px;top:613.14px;font-size:12px;line-height:13.799999999999999px;color:#666;font-weight:normal;white-space:nowrap;">CM00003</div>
<div style="position:absolute;left:307px;top:613.14px;font-size:12px;line-height:13.799999999999999px;color:#666;font-weight:normal;white-space:nowrap;">Oil-Purifier 1800</div>
<svg style="left:524px;top:611px" width="16" height="16"><circle cx="8" cy="8" r="8" fill="#e4293f"/><path d="M4.6 6.6 L8 9.9 L11.4 6.6" fill="none" stroke="#fff" stroke-width="2.1"/></svg>
<div style="position:absolute;right:712px;top:613.14px;font-size:12px;line-height:13.799999999999999px;color:#666;font-weight:normal;white-space:nowrap;text-align:right;">60.00 L</div>
<div style="position:absolute;right:546px;top:613.14px;font-size:12px;line-height:13.799999999999999px;color:#666;font-weight:normal;white-space:nowrap;text-align:right;">60.00 L</div>
<div style="position:absolute;right:388px;top:613.14px;font-size:12px;line-height:13.799999999999999px;color:#666;font-weight:normal;white-space:nowrap;text-align:right;">100.00 L</div>
<div style="position:absolute;right:232px;top:613.14px;font-size:12px;line-height:13.799999999999999px;color:#666;font-weight:normal;white-space:nowrap;text-align:right;">$ 18.75</div>
<div style="position:absolute;right:73px;top:613.14px;font-size:12px;line-height:13.799999999999999px;color:#666;font-weight:normal;white-space:nowrap;text-align:right;">$ 1,125.00</div>
<svg style="left:49px;top:653px" width="15" height="15"><circle cx="7.5" cy="7.4" r="6.1" fill="#fff" stroke="#666" stroke-width="1.05"/></svg>
<svg style="left:96px;top:648px" width="20" height="21" viewBox="0 0 20 21">
<path d="M10 1.7 L17.9 6.3 L17.9 15.5 L10 20.1 L2.1 15.5 L2.1 6.3 Z" fill="#70c69c" stroke="#70c69c" stroke-width="1.6" stroke-linejoin="round"/>
<path d="M8.9 8.4 L14.2 6.9 L15.4 11.3 L10.1 12.8 Z" fill="#eaf8ef"/>
<path d="M5.1 6.7 L6.7 7.6 L8.7 13.4" fill="none" stroke="#1b7a45" stroke-width="1.5" stroke-linecap="round"/>
<path d="M8.4 13.6 L15.4 11.6" stroke="#1b7a45" stroke-width="1.4"/>
<circle cx="8.6" cy="14.2" r="1.5" fill="#1b7a45"/><circle cx="8.6" cy="14.2" r="0.5" fill="#70c69c"/>
</svg>
<div style="position:absolute;left:151px;top:653.14px;font-size:12px;line-height:13.799999999999999px;color:#666;font-weight:normal;white-space:nowrap;">CM00004</div>
<div style="position:absolute;left:307px;top:653.14px;font-size:12px;line-height:13.799999999999999px;color:#666;font-weight:normal;white-space:nowrap;">Coolant filter</div>
<svg style="left:524px;top:651px" width="16" height="16"><circle cx="8" cy="8" r="8" fill="#4aa04a"/><path d="M4.6 9.6 L8 6.3 L11.4 9.6" fill="none" stroke="#fff" stroke-width="2.1"/></svg>
<div style="position:absolute;right:712px;top:653.14px;font-size:12px;line-height:13.799999999999999px;color:#666;font-weight:normal;white-space:nowrap;text-align:right;">48.00 un</div>
<div style="position:absolute;right:546px;top:653.14px;font-size:12px;line-height:13.799999999999999px;color:#666;font-weight:normal;white-space:nowrap;text-align:right;">10.00 un</div>
<div style="position:absolute;right:388px;top:653.14px;font-size:12px;line-height:13.799999999999999px;color:#666;font-weight:normal;white-space:nowrap;text-align:right;">30.00 un</div>
<div style="position:absolute;right:232px;top:653.14px;font-size:12px;line-height:13.799999999999999px;color:#666;font-weight:normal;white-space:nowrap;text-align:right;">$ 7.00</div>
<div style="position:absolute;right:73px;top:653.14px;font-size:12px;line-height:13.799999999999999px;color:#666;font-weight:normal;white-space:nowrap;text-align:right;">$ 336.00</div>
<svg style="left:49px;top:693px" width="15" height="15"><circle cx="7.5" cy="7.4" r="6.1" fill="#fff" stroke="#666" stroke-width="1.05"/></svg>
<svg style="left:96px;top:688px" width="20" height="21" viewBox="0 0 20 21">
<path d="M10 1.7 L17.9 6.3 L17.9 15.5 L10 20.1 L2.1 15.5 L2.1 6.3 Z" fill="#70c69c" stroke="#70c69c" stroke-width="1.6" stroke-linejoin="round"/>
<path d="M8.9 8.4 L14.2 6.9 L15.4 11.3 L10.1 12.8 Z" fill="#eaf8ef"/>
<path d="M5.1 6.7 L6.7 7.6 L8.7 13.4" fill="none" stroke="#1b7a45" stroke-width="1.5" stroke-linecap="round"/>
<path d="M8.4 13.6 L15.4 11.6" stroke="#1b7a45" stroke-width="1.4"/>
<circle cx="8.6" cy="14.2" r="1.5" fill="#1b7a45"/><circle cx="8.6" cy="14.2" r="0.5" fill="#70c69c"/>
</svg>
<div style="position:absolute;left:151px;top:693.14px;font-size:12px;line-height:13.799999999999999px;color:#666;font-weight:normal;white-space:nowrap;">CM00005</div>
<div style="position:absolute;left:307px;top:693.14px;font-size:12px;line-height:13.799999999999999px;color:#666;font-weight:normal;white-space:nowrap;">Relief valve</div>
<svg style="left:524px;top:691px" width="16" height="16"><circle cx="8" cy="8" r="8" fill="#4aa04a"/><path d="M4.6 9.6 L8 6.3 L11.4 9.6" fill="none" stroke="#fff" stroke-width="2.1"/></svg>
<div style="position:absolute;right:712px;top:693.14px;font-size:12px;line-height:13.799999999999999px;color:#666;font-weight:normal;white-space:nowrap;text-align:right;">22.00 un</div>
<div style="position:absolute;right:546px;top:693.14px;font-size:12px;line-height:13.799999999999999px;color:#666;font-weight:normal;white-space:nowrap;text-align:right;">3.00 un</div>
<div style="position:absolute;right:388px;top:693.14px;font-size:12px;line-height:13.799999999999999px;color:#666;font-weight:normal;white-space:nowrap;text-align:right;">10.00 un</div>
<div style="position:absolute;right:232px;top:693.14px;font-size:12px;line-height:13.799999999999999px;color:#666;font-weight:normal;white-space:nowrap;text-align:right;">$ 5.00</div>
<div style="position:absolute;right:73px;top:693.14px;font-size:12px;line-height:13.799999999999999px;color:#666;font-weight:normal;white-space:nowrap;text-align:right;">$ 110.00</div>
<div style="position:absolute;left:43px;top:717px;width:1272px;height:31px;background:#e6e6e6;border-top:1px solid #d2d2d2;"></div>
<div style="position:absolute;right:183px;top:727.14px;font-size:12px;line-height:13.799999999999999px;color:#888;font-weight:normal;white-space:nowrap;text-align:right;">Total records: 9</div>
<div style="position:absolute;left:1195px;top:718px;width:1px;height:30px;background:#d6d6d6;"></div>
<div style="position:absolute;left:1240px;top:718px;width:1px;height:30px;background:#d6d6d6;"></div>
<div style="position:absolute;left:1271px;top:718px;width:1px;height:30px;background:#d6d6d6;"></div>
<div style="position:absolute;left:1301px;top:494px;width:1px;height:223px;background:#e4e4e4;"></div>
<svg style="left:1215px;top:728px" width="6" height="9"><path d="M5.5 0 V9 L0 4.5 Z" fill="#c6c6c6"/></svg>
<div style="position:absolute;left:1056px;width:400px;top:727.14px;font-size:12px;line-height:13.799999999999999px;color:#c6c6c6;font-weight:bold;white-space:nowrap;text-align:center;">1</div>
<svg style="left:1291px;top:728px" width="6" height="9"><path d="M0.5 0 V9 L6 4.5 Z" fill="#c6c6c6"/></svg>
</body></html>
